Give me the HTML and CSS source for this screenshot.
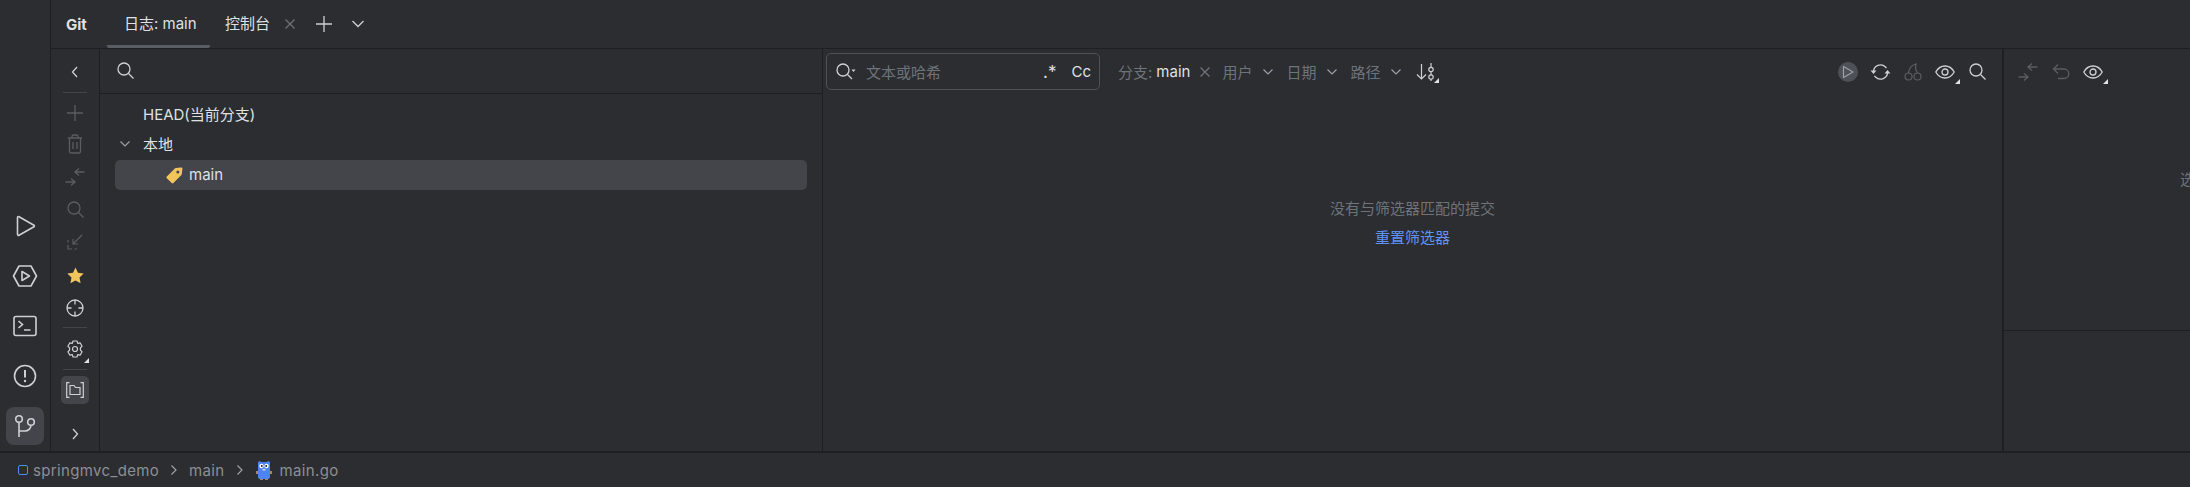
FILE: index.html
```html
<!DOCTYPE html>
<html lang="en">
<head>
    <meta charset="UTF-8">
    <meta name="viewport" content="width=device-width, initial-scale=1.0">
    <title>Git</title>
    <link rel="stylesheet" href="styles.css">
</head>
<body>
    <div class="app">
        <div class="main">
            <!-- Left tool stripe -->
            <div class="stripe">
                <div class="stripe-btn"><svg width="24" height="24" viewBox="0 0 24 24" fill="none" stroke="#ced0d6" stroke-width="1.6" stroke-linejoin="round"><path d="M4.500 3.500v17a1 1 0 0 0 1.500.8L21 12.800a1 1 0 0 0 0-1.600L6 2.700a1 1 0 0 0-1.500.8z"/></svg></div>
                <div class="stripe-btn"><svg width="26" height="24" viewBox="0 0 26 24" fill="none" stroke="#ced0d6" stroke-width="1.6" stroke-linejoin="round"><path d="M1.500 12L7 2h12l5.500 10L19 22H7z"/><path d="M10 7.500v9l7.500-4.500z"/></svg></div>
                <div class="stripe-btn"><svg width="24" height="22" viewBox="0 0 24 22" fill="none" stroke="#ced0d6" stroke-width="1.6"><rect x="1" y="1.500" width="22" height="19" rx="2"/><path d="M5.500 6l4 3.500-4 3.500M11 15h6.500"/></svg></div>
                <div class="stripe-btn"><svg width="24" height="24" viewBox="0 0 24 24" fill="none" stroke="#ced0d6" stroke-width="1.6"><circle cx="12" cy="12" r="10.500"/><path d="M12 6v7.500" stroke-width="2"/><circle cx="12" cy="17" r="1.200" fill="#ced0d6" stroke="none"/></svg></div>
                <div class="stripe-btn active"><svg width="24" height="24" viewBox="0 0 24 24" fill="none" stroke="#ced0d6" stroke-width="1.6"><circle cx="6" cy="5" r="3.300"/><circle cx="18" cy="8" r="3.300"/><path d="M6 8.300V23M6 17h6a6 6 0 0 0 6-5.700"/></svg></div>
            </div>

            <div class="tool-window">
                <!-- Tab header -->
                <div class="header">
                    <span class="title">Git</span>
                    <div class="tab selected">日志: main</div>
                    <div class="tab console">控制台</div>
                    <svg class="tab-close" width="12" height="12" viewBox="0 0 12 12" stroke="#6f737a" stroke-width="1.2"><path d="M1.500 1.500l9 9M10.500 1.500l-9 9"/></svg>
                    <svg class="tab-add" width="18" height="18" viewBox="0 0 18 18" stroke="#ced0d6" stroke-width="1.300"><path d="M9 1v16M1 9h16"/></svg>
                    <svg class="tab-more" width="14" height="14" viewBox="0 0 14 14" fill="none" stroke="#ced0d6" stroke-width="1.300"><path d="M1.500 4l5.500 5.500L12.500 4"/></svg>
                </div>

                <div class="content">
                    <!-- Branch toolbar -->
                    <div class="side-bar">
                        <div class="side-btn"><svg width="16" height="16" viewBox="0 0 16 16" fill="none" stroke="#ced0d6" stroke-width="1.300"><path d="M10 3L5.500 8l4.500 5"/></svg></div>
                        <div class="side-sep"></div>
                        <div class="side-btn"><svg width="16" height="16" viewBox="0 0 16 16" stroke="#5a5d63" stroke-width="1.300"><path d="M8 0v16M0 8h16"/></svg></div>
                        <div class="side-btn"><svg class="lift" width="16" height="20" viewBox="0 0 16 20" fill="none" stroke="#5a5d63" stroke-width="1.300"><path d="M1 4h14M5 4V2.500A1.500 1.500 0 0 1 6.500 1h3A1.500 1.500 0 0 1 11 2.500V4M2.500 4v13.500a1.500 1.500 0 0 0 1.500 1.500h8a1.500 1.500 0 0 0 1.500-1.500V4M6 8v7M10 8v7"/></svg></div>
                        <div class="side-btn"><svg class="lift" width="20" height="18" viewBox="0 0 20 18" fill="none" stroke="#5a5d63" stroke-width="1.300"><path d="M19.500 4H10M14 .5L10 4l4 3.500M.5 14H10M6 10.500L10 14l-4 3.500"/></svg></div>
                        <div class="side-btn"><svg class="lift" width="17" height="17" viewBox="0 0 17 17" fill="none" stroke="#5a5d63" stroke-width="1.300"><circle cx="7" cy="7" r="6"/><path d="M11.500 11.500l5 5"/></svg></div>
                        <div class="side-btn"><svg class="lift" width="16" height="16" viewBox="0 0 16 16" fill="none" stroke="#5a5d63" stroke-width="1.200"><path d="M15 1L6 10M1 6v2.500M1 11v4h4M7.500 15H10M6 5v5h5"/></svg></div>
                        <div class="side-btn"><svg width="17" height="17" viewBox="0 0 17 17" fill="#f2c55c"><path d="M8.500.5l2.500 5.300 5.700.7-4.200 4 1.100 5.800-5.100-2.900-5.100 2.900 1.100-5.800-4.200-4 5.700-.7z"/></svg></div>
                        <div class="side-btn"><svg width="18" height="18" viewBox="0 0 18 18" fill="none" stroke="#ced0d6" stroke-width="1.300"><circle cx="9" cy="9" r="8"/><path d="M9 1v4.500M9 12.500V17M1 9h4.500M12.500 9H17"/></svg></div>
                        <div class="side-sep tail"></div>
                        <div class="side-btn"><span class="drop"></span><svg width="16" height="18" viewBox="0 0 16 18" fill="none" stroke="#ced0d6" stroke-width="1.200" stroke-linejoin="round"><path d="M6 1h4l.7 2.400 2.400-.6 2 3.400L13.400 8v2l1.700 1.800-2 3.400-2.400-.6L10 17H6l-.7-2.400-2.400.6-2-3.400L2.600 10V8L.9 6.200l2-3.400 2.400.6z"/><circle cx="8" cy="9" r="2.500"/></svg></div>
                        <div class="side-sep"></div>
                        <div class="side-btn on"><svg width="18" height="16" viewBox="0 0 18 16" fill="none" stroke="#ced0d6" stroke-width="1.200"><path d="M3.500.7H.7v14.600h2.800M14.500.7h2.800v14.600h-2.800M4 12.500v-9h4l1.500 2H14v7z"/></svg></div>
                        <div class="side-btn bottom"><svg width="16" height="16" viewBox="0 0 16 16" fill="none" stroke="#ced0d6" stroke-width="1.300"><path d="M6 3l4.500 5L6 13"/></svg></div>
                    </div>

                    <!-- Branches -->
                    <div class="branches">
                        <div class="branch-search"><svg width="17" height="17" viewBox="0 0 17 17" fill="none" stroke="#ced0d6" stroke-width="1.300"><circle cx="7" cy="7" r="6"/><path d="M11.500 11.500l5 5"/></svg></div>
                        <div class="tree">
                            <div class="tree-row">HEAD(当前分支)</div>
                            <div class="tree-row"><svg class="tree-arrow" width="12" height="12" viewBox="0 0 12 12" fill="none" stroke="#9da0a8" stroke-width="1.200"><path d="M1.500 3.500L6 8l4.500-4.500"/></svg>本地</div>
                            <div class="tree-row current"><svg class="tag" width="17" height="17" viewBox="0 0 17 17"><path fill="#f2c55c" d="M.8 9.500L8.800 1.500a1.500 1.500 0 0 1 1-.4l5.200-.6a1.200 1.200 0 0 1 1.400 1.400l-.6 5.200a1.500 1.500 0 0 1-.4 1l-8 8a1.200 1.200 0 0 1-1.700 0L.8 11.200a1.200 1.200 0 0 1 0-1.700z"/><circle cx="11.800" cy="5" r="1.500" fill="#43454a"/></svg>main</div>
                        </div>
                    </div>

                    <!-- Commit log -->
                    <div class="log">
                        <div class="log-bar">
                            <div class="search-box">
                                <svg width="20" height="17" viewBox="0 0 20 17" fill="none" stroke="#ced0d6" stroke-width="1.300"><circle cx="7" cy="7" r="6"/><path d="M11.500 11.500l4.500 4.500"/><path d="M15.500 6.500h4l-2 2.500z" fill="#ced0d6" stroke="none"/></svg>
                                <span class="placeholder">文本或哈希</span>
                                <span class="regex">.*</span>
                                <span class="case">Cc</span>
                            </div>
                            <div class="filter first"><span class="muted">分支:</span> main</div>
                            <svg class="filter-x" width="12" height="12" viewBox="0 0 12 12" stroke="#6f737a" stroke-width="1.200"><path d="M1.500 1.500l9 9M10.500 1.500l-9 9"/></svg>
                            <div class="filter muted">用户<svg width="12" height="12" viewBox="0 0 12 12" fill="none" stroke="#9da0a8" stroke-width="1.200"><path d="M1.500 3.500L6 8l4.500-4.500"/></svg></div>
                            <div class="filter muted">日期<svg width="12" height="12" viewBox="0 0 12 12" fill="none" stroke="#9da0a8" stroke-width="1.200"><path d="M1.500 3.500L6 8l4.500-4.500"/></svg></div>
                            <div class="filter muted">路径<svg width="12" height="12" viewBox="0 0 12 12" fill="none" stroke="#9da0a8" stroke-width="1.200"><path d="M1.500 3.500L6 8l4.500-4.500"/></svg></div>
                            <div class="sort"><span class="drop"></span><svg width="20" height="18" viewBox="0 0 20 18" fill="none" stroke="#ced0d6" stroke-width="1.200"><path d="M5.500 1v15M1 11.500L5.500 16l4.500-4.500M15 0v4M15 9v3M15 16v2"/><circle cx="15" cy="6.500" r="2.200"/><circle cx="15" cy="14" r="2.200"/></svg></div>
                            <div class="log-actions">
                                <div class="run-btn"><svg width="12" height="14" viewBox="0 0 12 14" fill="none" stroke="#9da0a8" stroke-width="1.200" stroke-linejoin="round"><path d="M1.500 1.500v11L11 7z"/></svg></div>
                                <div class="log-btn"><svg width="21" height="18" viewBox="0 0 21 18" fill="none" stroke="#ced0d6" stroke-width="1.300"><path d="M3.500 9a7 7 0 0 1 12-5l1 1.200M17.500 9a7 7 0 0 1-12 5l-1-1.200"/><path d="M.5 7.500h6L3.500 11zM14.500 10.500h6L17.500 7z" fill="#ced0d6" stroke="none"/></svg></div>
                                <div class="log-btn"><svg width="18" height="18" viewBox="0 0 18 18" fill="none" stroke="#5a5d63" stroke-width="1.200"><circle cx="4.500" cy="13.500" r="3.500"/><circle cx="13.500" cy="13.500" r="3.500"/><path d="M4.500 10C5 5.500 8 2 12 1c-1 3-.5 6 1.500 9M12 1h1"/></svg></div>
                                <div class="log-btn"><span class="drop"></span><svg width="20" height="14" viewBox="0 0 20 14" fill="none" stroke="#ced0d6" stroke-width="1.300"><path d="M.8 7C3 3 6 1 10 1s7 2 9.200 6C17 11 14 13 10 13S3 11 .8 7z"/><circle cx="10" cy="7" r="3"/></svg></div>
                                <div class="log-btn"><svg width="17" height="17" viewBox="0 0 17 17" fill="none" stroke="#ced0d6" stroke-width="1.300"><circle cx="7" cy="7" r="6"/><path d="M11.500 11.500l5 5"/></svg></div>
                            </div>
                        </div>
                        <div class="empty">
                            <div class="empty-text">没有与筛选器匹配的提交</div>
                            <div class="reset-link">重置筛选器</div>
                        </div>
                    </div>

                    <!-- Commit details -->
                    <div class="details">
                        <div class="details-bar">
                            <div class="log-btn"><svg width="20" height="18" viewBox="0 0 20 18" fill="none" stroke="#5a5d63" stroke-width="1.300"><path d="M19.500 4H10M14 .5L10 4l4 3.500M.5 14H10M6 10.500L10 14l-4 3.500"/></svg></div>
                            <div class="log-btn"><svg width="18" height="16" viewBox="0 0 18 16" fill="none" stroke="#5a5d63" stroke-width="1.300"><path d="M6 .5L1.500 5 6 9.500M1.500 5H12a4.500 4.500 0 0 1 0 9.500H6"/></svg></div>
                            <div class="log-btn"><span class="drop"></span><svg width="20" height="14" viewBox="0 0 20 14" fill="none" stroke="#ced0d6" stroke-width="1.300"><path d="M.8 7C3 3 6 1 10 1s7 2 9.200 6C17 11 14 13 10 13S3 11 .8 7z"/><circle cx="10" cy="7" r="3"/></svg></div>
                        </div>
                        <div class="changes"><span class="muted">选择提交以查看更改</span></div>
                        <div class="commit-info"></div>
                    </div>
                </div>
            </div>
        </div>

        <!-- Status bar breadcrumbs -->
        <div class="status">
            <span class="module-icon"></span>
            <span class="crumb">springmvc_demo</span>
            <svg class="crumb-arrow" width="12" height="12" viewBox="0 0 12 12" fill="none" stroke="#9da0a8" stroke-width="1.200"><path d="M3.500 1.500L8 6l-4.500 4.500"/></svg>
            <span class="crumb">main</span>
            <svg class="crumb-arrow" width="12" height="12" viewBox="0 0 12 12" fill="none" stroke="#9da0a8" stroke-width="1.200"><path d="M3.500 1.500L8 6l-4.500 4.500"/></svg>
            <svg class="gopher" width="16" height="20" viewBox="0 0 16 20"><path fill="#a9876d" d="M0 11h2v3H0zM14 11h2v3h-2zM4 18h3v2H4zM9 18h3v2H9z"/><path fill="#4d84f5" d="M2 2l2-1 1 1h6l1-1 2 1v15a2 2 0 0 1-2 2H4a2 2 0 0 1-2-2z"/><circle cx="5.500" cy="6" r="2.200" fill="#fff"/><circle cx="10.500" cy="6" r="2.200" fill="#fff"/><circle cx="5.800" cy="6" r="1" fill="#222"/><circle cx="10.200" cy="6" r="1" fill="#222"/><path fill="#e9d5c5" d="M6.500 9h3v1.500h-3z"/></svg>
            <span class="crumb file">main.go</span>
        </div>
    </div>
</body>
</html>
```

FILE: styles.css
```css
/* Reset margin and padding */
* {
    margin: 0;
    padding: 0;
    box-sizing: border-box;
}

body {
    width: 2190px;
    height: 487px;
    overflow: hidden;
    background-color: #2b2d30;
    color: #dfe1e5;
    font-family: 'Inter', 'Noto Sans CJK SC', sans-serif;
    font-size: 15px;
}

svg {
    display: block;
    flex: none;
}

.muted {
    color: #6f737a;
}

.app {
    display: flex;
    flex-direction: column;
    height: 487px;
}

.main {
    display: flex;
    flex: none;
    height: 453px;
    border-bottom: 2px solid #1e1f22;
}

/* Left tool stripe */
.stripe {
    width: 51px;
    flex: none;
    border-right: 1px solid #1e1f22;
    display: flex;
    flex-direction: column;
    align-items: center;
    justify-content: flex-end;
    padding-bottom: 6px;
}

.stripe-btn {
    width: 38px;
    height: 38px;
    margin-top: 12px;
    margin-right: 1px;
    border-radius: 8px;
    display: flex;
    align-items: center;
    justify-content: center;
}

.stripe-btn.active {
    background-color: #43454a;
}

.tool-window {
    flex: 1;
    min-width: 0;
    display: flex;
    flex-direction: column;
}

/* Tab header */
.header {
    height: 49px;
    flex: none;
    display: flex;
    align-items: center;
    border-bottom: 1px solid #1e1f22;
    padding-left: 15px;
}

.title {
    font-weight: 700;
    width: 41px;
}

.tab {
    height: 48px;
    line-height: 48px;
    white-space: nowrap;
}

.tab.selected {
    width: 103px;
    padding-left: 17px;
    border-bottom: 3px solid #5a5d63;
    border-radius: 0 0 2px 2px;
}

.tab.console {
    margin-left: 15px;
}

.tab-close {
    margin-left: 14px;
}

.tab-add {
    margin-left: 19px;
}

.tab-more {
    margin-left: 18px;
}

.content {
    flex: 1;
    min-height: 0;
    display: flex;
}

/* Branch toolbar */
.side-bar {
    width: 49px;
    flex: none;
    border-right: 1px solid #1e1f22;
    display: flex;
    flex-direction: column;
    align-items: center;
    padding-top: 7px;
}

.side-btn {
    position: relative;
    width: 28px;
    height: 32.5px;
    flex: none;
    display: flex;
    align-items: center;
    justify-content: center;
}

.side-btn .lift {
    margin-bottom: 2px;
}

.side-btn.on {
    height: 28px;
    margin: 2px 0;
    background-color: #43454a;
    border-radius: 5px;
}

.side-btn.bottom {
    margin-top: auto;
    margin-bottom: 1px;
}

.side-sep {
    width: 24px;
    height: 1px;
    flex: none;
    margin: 3.5px 0;
    background-color: #43454a;
}

.side-sep.tail {
    margin: 3px 0 5px;
}

/* small corner triangle on dropdown icons */
.drop {
    position: absolute;
    right: 0;
    bottom: 3px;
    width: 0;
    height: 0;
    border-left: 5px solid transparent;
    border-bottom: 5px solid #dfe1e5;
}

/* Branches */
.branches {
    width: 723px;
    flex: none;
    border-right: 1px solid #1e1f22;
}

.branch-search {
    height: 45px;
    border-bottom: 1px solid #1e1f22;
    padding: 13px 0 0 17px;
}

.tree {
    padding: 6px 15px 0;
}

.tree-row {
    position: relative;
    height: 30px;
    line-height: 30px;
    padding-left: 28px;
    white-space: nowrap;
}

.tree-arrow {
    position: absolute;
    left: 4px;
    top: 8px;
}

.tree-row.current {
    display: flex;
    align-items: center;
    padding-left: 51px;
    background-color: #43454a;
    border-radius: 5px;
}

.tag {
    margin-right: 6px;
}

/* Commit log */
.log {
    width: 1181px;
    flex: none;
    border-right: 2px solid #1e1f22;
}

.log-bar {
    height: 44px;
    display: flex;
    align-items: center;
    padding: 1px 0 0 3px;
    white-space: nowrap;
}

.search-box {
    width: 274px;
    height: 37px;
    flex: none;
    display: flex;
    align-items: center;
    padding: 0 8px 0 9px;
    border: 1px solid #4e5157;
    border-radius: 5px;
}

.placeholder {
    margin-left: 10px;
    color: #6f737a;
}

.regex {
    margin-left: auto;
    font-size: 17px;
}

.case {
    margin-left: 15px;
}

.filter {
    display: flex;
    align-items: center;
    gap: 4px;
    margin-left: 12px;
}

.filter.first {
    margin-left: 18px;
}

.filter svg {
    margin-left: 6px;
}

.filter-x {
    margin-left: 9px;
    margin-right: -1px;
}

.sort {
    position: relative;
    margin-left: 14px;
    padding-right: 3px;
}

.sort .drop {
    bottom: -2px;
}

.log-actions {
    margin-left: auto;
    margin-right: 8px;
    display: flex;
    align-items: center;
}

.run-btn {
    width: 20px;
    height: 20px;
    margin-right: 6px;
    border-radius: 50%;
    background-color: #4e5157;
    display: flex;
    align-items: center;
    justify-content: center;
}

.log-btn {
    position: relative;
    width: 32.5px;
    height: 28px;
    display: flex;
    align-items: center;
    justify-content: center;
}

.log-btn .drop {
    right: 2px;
    bottom: 2px;
}

.empty {
    padding-top: 106px;
    text-align: center;
}

.empty-text {
    height: 29px;
    line-height: 20px;
    color: #6f737a;
}

.reset-link {
    line-height: 20px;
    color: #5f93f8;
}

/* Commit details */
.details {
    flex: 1;
    min-width: 0;
    display: flex;
    flex-direction: column;
}

.details-bar {
    height: 44px;
    flex: none;
    display: flex;
    align-items: center;
    padding: 1px 0 0 8px;
}

.changes {
    height: 238px;
    flex: none;
    overflow: hidden;
    white-space: nowrap;
    padding: 75px 0 0 176px;
    border-bottom: 1px solid #1e1f22;
}

.commit-info {
    flex: 1;
}

/* Status bar breadcrumbs */
.status {
    flex: 1;
    display: flex;
    align-items: center;
    padding-left: 18px;
    color: #8c8f96;
    letter-spacing: 0.35px;
}

.module-icon {
    width: 10px;
    height: 10px;
    margin-right: 5px;
    border: 1.5px solid #548af7;
    border-radius: 2px;
}

.crumb-arrow {
    margin: 0 9px;
}

.gopher {
    margin: 0 8px 0 1px;
}
```
